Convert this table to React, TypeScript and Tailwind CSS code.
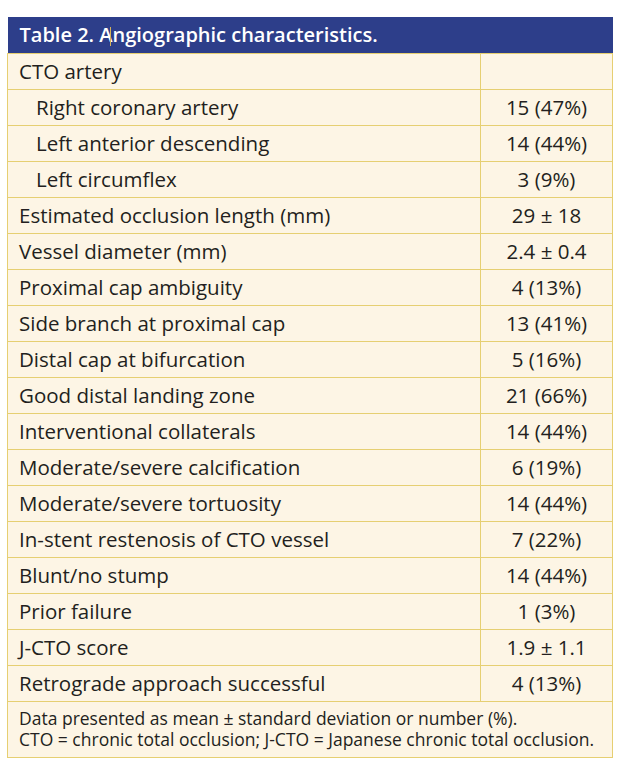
const rows: { label: string; value: string; indent?: boolean }[] = [
  { label: 'CTO artery', value: '' },
  { label: 'Right coronary artery', value: '15 (47%)', indent: true },
  { label: 'Left anterior descending', value: '14 (44%)', indent: true },
  { label: 'Left circumflex', value: '3 (9%)', indent: true },
  { label: 'Estimated occlusion length (mm)', value: '29 ± 18' },
  { label: 'Vessel diameter (mm)', value: '2.4 ± 0.4' },
  { label: 'Proximal cap ambiguity', value: '4 (13%)' },
  { label: 'Side branch at proximal cap', value: '13 (41%)' },
  { label: 'Distal cap at bifurcation', value: '5 (16%)' },
  { label: 'Good distal landing zone', value: '21 (66%)' },
  { label: 'Interventional collaterals', value: '14 (44%)' },
  { label: 'Moderate/severe calcification', value: '6 (19%)' },
  { label: 'Moderate/severe tortuosity', value: '14 (44%)' },
  { label: 'In-stent restenosis of CTO vessel', value: '7 (22%)' },
  { label: 'Blunt/no stump', value: '14 (44%)' },
  { label: 'Prior failure', value: '1 (3%)' },
  { label: 'J-CTO score', value: '1.9 ± 1.1' },
  { label: 'Retrograde approach successful', value: '4 (13%)' },
]

export default function App() {
  return (
    <div className="min-h-screen bg-white pt-[17px] pl-[7px] font-['Open_Sans',sans-serif] text-[#231f20]">
      <table className="w-[606px] border-collapse">
        <thead>
          <tr>
            <th
              colSpan={2}
              className="h-[36px] bg-[#2d3e8a] pl-[12px] text-left text-[20px] font-semibold text-white"
            >
              Table 2. A
              {/* stray text cursor captured in the screenshot */}
              <span className="-ml-[2px] mr-[1px] inline-block h-[19px] w-px align-[-4px] bg-[#d4b35a]" />
              ngiographic characteristics.
            </th>
          </tr>
        </thead>
        <tbody className="bg-[#fdf5e5] text-[20.5px]">
          {rows.map((r) => (
            <tr key={r.label} className="h-[36px]">
              <td
                className={`border border-[#e6cf72] ${r.indent ? 'pl-[28px]' : 'pl-[11px]'}`}
              >
                {r.label}
              </td>
              <td className="w-[132px] border border-[#e6cf72] text-center">{r.value}</td>
            </tr>
          ))}
          <tr>
            <td
              colSpan={2}
              className="border border-[#e6cf72] px-[11px] pt-[6px] pb-[7px] text-[17.5px] leading-[21px]"
            >
              Data presented as mean ± standard deviation or number (%).
              <br />
              CTO = chronic total occlusion; J-CTO = Japanese chronic total occlusion.
            </td>
          </tr>
        </tbody>
      </table>
    </div>
  )
}
